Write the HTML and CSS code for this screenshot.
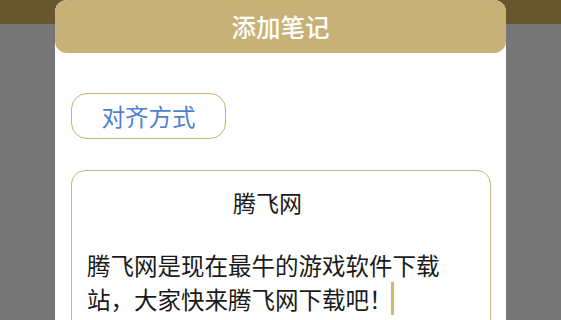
FILE: index.html
```html
<!DOCTYPE html>
<html lang="zh">
<head>
  <meta charset="UTF-8">
  <meta name="viewport" content="width=device-width, initial-scale=1">
  <title>添加笔记</title>
  <link rel="stylesheet" href="styles.css">
</head>
<body>
  <div class="page">
    <div class="page-top"></div>
    <div class="page-rest"></div>
  </div>

  <div class="modal">
    <div class="modal-head">添加笔记</div>
    <div class="modal-body">
      <button class="align-btn">对齐方式</button>
      <div class="note">
        <div class="note-title">腾飞网</div>
        <div class="note-text">腾飞网是现在最牛的游戏软件下载站，大家快来腾飞网下载吧！<span class="caret"></span></div>
      </div>
    </div>
  </div>
</body>
</html>
```

FILE: styles.css
```css
body {
  margin: 0;
  font-family: "Noto Sans CJK SC", "Noto Sans", sans-serif;
  overflow: hidden;
}
.page {
  display: flex; flex-direction: column;
  height: 320px;
}
.page-top { height: 24px; background: #66562e; }
.page-rest { flex: 1; background: #777777; }

.modal {
  position: absolute; top: 0; left: 55px;
  width: 451px; height: 320px;
  overflow: hidden;
  background: #fff;
  border-radius: 12px 12px 0 0;
}
.modal-head {
  height: 53px; line-height: 53px;
  background: #c7b177; color: #fff;
  border-radius: 12px;
  text-align: center;
  font-size: 24.5px; font-weight: 500;
}
.modal-body {
  display: flex; flex-direction: column; align-items: flex-start;
  padding: 40px 15px 0 16px;
}
.align-btn {
  width: 155px; height: 46px;
  background: #fff; color: #4d7fd3;
  border: 1.5px solid #c7b177; border-radius: 16px;
  font-family: inherit; font-size: 23.5px;
  padding: 0;
}
.note {
  margin-top: 31px;
  width: 420px; box-sizing: border-box;
  border: 1.5px solid #c9b47e; border-radius: 14px;
  padding: 14px 42px 20px 15px;
  color: #1a1a1a;
  font-size: 23.5px;
}
.note-title { line-height: 34px; text-align: center; font-size: 23px; }
.note-text { margin-top: 29px; line-height: 34px; }
.caret {
  display: inline-block; vertical-align: top;
  width: 3px; height: 33px; margin-left: -2px;
  background: #d2b76c;
}
```
